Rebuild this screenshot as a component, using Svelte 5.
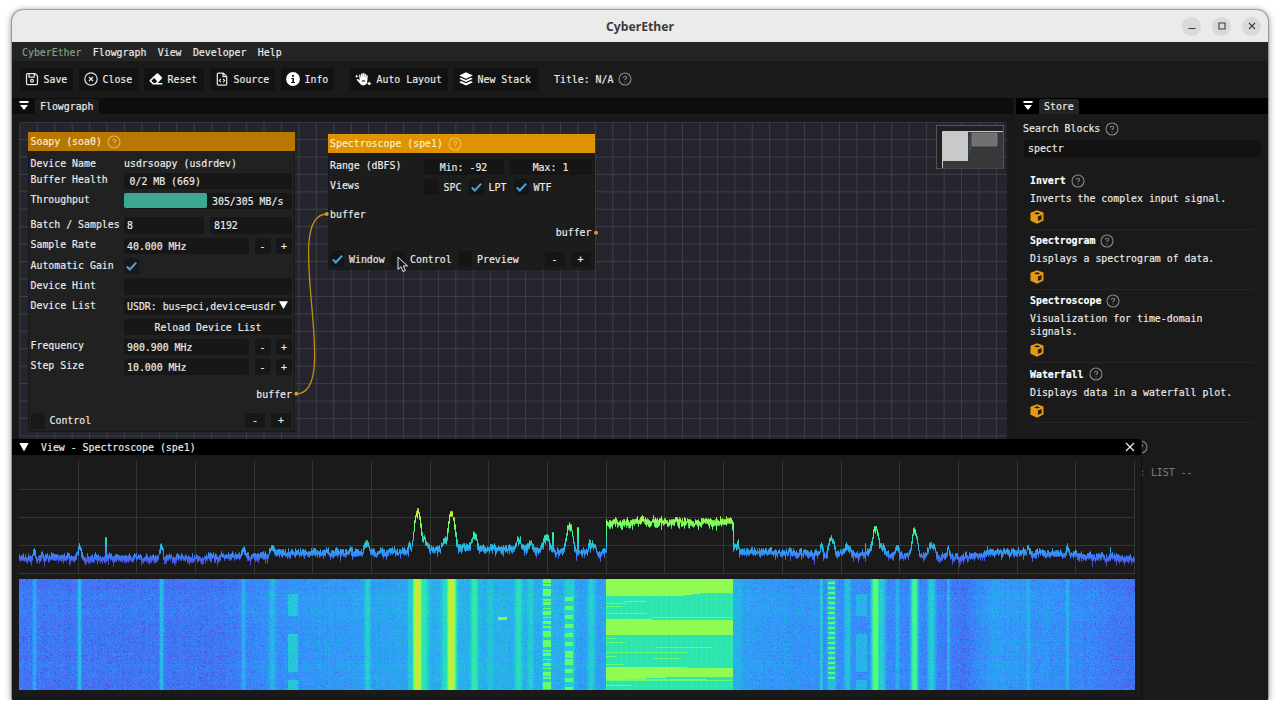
<script>
  import { onMount } from 'svelte';

  const menus = ['Flowgraph', 'View', 'Developer', 'Help'];
  const blocks = [
    { name: 'Invert', text: 'Inverts the complex input signal.' },
    { name: 'Spectrogram', text: 'Displays a spectrogram of data.' },
    { name: 'Spectroscope', text: 'Visualization for time-domain signals.' },
    { name: 'Waterfall', text: 'Displays data in a waterfall plot.' }
  ];

  const W = 1116;
  const PLOT_H = 113;
  const FALL_H = 111;
  let plot;
  let fall;

  // Noise floor as [x, y] points of the trace.
  const floor = [[0, 97], [200, 97], [225, 95], [260, 93], [350, 91], [410, 89], [440, 88], [540, 89], [560, 91], [586, 91], [715, 91], [760, 92], [910, 95], [945, 97], [975, 91], [1030, 93], [1075, 95], [1116, 98]];
  // Signals as [x, peak y, half width].
  const peaks = [[15, 89, 2], [60, 85, 2], [142, 86, 2], [224, 88, 2], [253, 87, 3], [348, 82, 3], [390, 83, 1.5], [398, 51, 4.5], [404, 77, 5], [426, 80, 4], [432, 53, 4.5], [455, 76, 3.5], [471, 85, 3], [499, 79, 3.5], [511, 83, 3], [527, 75, 3.5], [550, 66, 4], [572, 83, 4], [717, 84, 4], [802, 84, 1.5], [812, 77, 3.5], [828, 85, 3], [856, 68, 4], [862, 83, 4], [878, 88, 2], [895, 71, 3.5], [912, 83, 4], [929, 88, 1.5], [1009, 88, 1.5], [1048, 87, 1.5]];
  const spikes = [[86, 76], [533, 71], [558, 66], [846, 82], [1091, 86]];

  let seed = 77;
  function rnd() {
    seed = (seed * 1664525 + 1013904223) >>> 0;
    return seed / 4294967296;
  }
  const gauss = () => rnd() + rnd() + rnd() - 1.5;

  function traceY(x) {
    if (x >= 587 && x <= 713) return 61;
    let i = 1;
    while (i < floor.length - 1 && floor[i][0] < x) i++;
    const [x0, y0] = floor[i - 1];
    const [x1, y1] = floor[i];
    const base = y0 + ((y1 - y0) * (x - x0)) / (x1 - x0);
    let y = base;
    for (const [px, py, w] of peaks) {
      const d = Math.abs(x - px) / w;
      if (d < 3) y = Math.min(y, base - (base - py) * Math.exp(-Math.pow(d, 2.8)));
    }
    return y;
  }
  const level = (y) => 0.13 + (97 - y) * 0.0096;

  function turbo(v) {
    const x = Math.max(0.03, Math.min(1, v));
    const r = 0.1357 + x * (4.5974 - x * (42.3277 - x * (130.5887 - x * (150.5666 - x * 58.1375))));
    const g = 0.0914 + x * (2.1856 + x * (4.8052 - x * (14.0195 - x * (4.2109 + x * 2.7747))));
    const b = 0.1067 + x * (12.5925 - x * (60.1097 - x * (109.0745 - x * (88.5066 - x * 26.8183))));
    return [r, g, b].map((c) => Math.round(255 * Math.max(0, Math.min(1, c))));
  }

  function drawPlot() {
    const c = plot.getContext('2d');
    c.fillStyle = '#363636';
    for (let i = 1; i <= 19; i++) c.fillRect(Math.min(W - 1, Math.round(i * 58.68)), 0, 1, PLOT_H);
    for (const y of [28, 56, 84, 112]) c.fillRect(0, y, W, 1);
    let prev = traceY(0);
    let drift = 0;
    for (let x = 0; x < W; x++) {
      const inBand = x >= 587 && x <= 713;
      const base = traceY(x);
      drift = drift * 0.5 + gauss() * 2.2;
      let top = base + drift - 1.5 - rnd() * 3;
      let bottom = base + drift + 1.5 + rnd() * 3;
      if (rnd() < 0.15) bottom += rnd() * 6;
      if (inBand && rnd() < 0.1) bottom += 3;
      for (const [sx, sy] of spikes) if (x === sx || (x === sx + 1 && sx < 600)) top = sy;
      if (Math.abs(prev - base) > 4) {
        top = Math.min(top, prev);
        bottom = Math.max(bottom, prev);
      }
      prev = base;
      for (let y = Math.round(top); y <= bottom; y++) {
        const edge = y <= top + 0.6 || y >= bottom - 1.2;
        c.fillStyle = `rgba(${turbo(level(y)).join(',')},${edge ? 0.75 : 1})`;
        c.fillRect(x, y, 1, 1);
      }
    }
  }

  function drawFall() {
    const c = fall.getContext('2d');
    const img = c.createImageData(W, FALL_H);
    const cols = [];
    const jitter = [];
    for (let x = 0; x < W; x++) {
      cols.push(level(traceY(x)) + 0.015);
      jitter.push(gauss() * 0.008);
    }
    const rows = Array.from({ length: FALL_H }, (_, y) => gauss() * 0.007 + (y > 14 && y < 38 ? 0.008 : 0));
    const bursts = (y) => (y >= 15 && y < 37) || (y >= 55 && y < 93) || y >= 101;
    const gate546 = Array.from({ length: FALL_H }, (_, y) => Math.sin(y * 1.35) + Math.sin(y * 0.61) > -0.1);
    const gate569 = (y) => y > 17 && (y % 9 < 4 || (y > 70 && y < 86 && y % 4 < 3));
    const streaks = [[22, 18, 40], [24, 0, 20], [27, 0, 15], [34, 0, 41], [38, 45, 126], [59, 0, 10], [63, 0, 20], [68, 50, 105], [73, 0, 82], [77, 0, 10], [79, 48, 75], [85, 0, 18], [100, 20, 100], [101, 0, 126], [106, 0, 25]];
    for (let y = 0; y < FALL_H; y++) {
      for (let x = 0; x < W; x++) {
        let v = cols[x] + jitter[x] + rows[y];
        let n = gauss() * 0.03;
        if (rnd() < 0.07 && v < 0.2) n -= 0.035;
        if (x >= 587 && x < 714) {
          const dx = x - 587;
          const band = y < (dx > 70 ? 17 - Math.min(3, (dx - 70) / 8) : 17) || (y >= 40 + (dx > 45 ? 1 : 0) && y < 56) || (y >= (dx > 80 ? 89 : 88) && y < 101 - Math.min(3, dx / 20));
          v = band ? 0.495 : 0.33 + (dx % 5 === 0 ? 0.02 : 0);
          for (const [sy, s, e] of streaks) if (sy === y && dx >= s && dx < e) v = 0.44;
          n *= band ? 0.25 : 0.55;
          if (dx === 63) v -= 0.03;
        } else if (x >= 524 && x <= 531) v = gate546[y] ? 0.44 : 0.28;
        else if (x >= 546 && x <= 553) v = gate569(y) ? 0.43 : 0.28;
        else if (x >= 809 && x <= 815) v = y % 5 >= 3 && y < 101 ? 0.43 : 0.25;
        else if (x >= 269 && x <= 278) v = bursts(y) ? 0.27 : v;
        else if (x >= 837 && x <= 847) v = bursts(y) ? 0.24 : v;
        else if (x >= 714 && x < 721) v = 0.23;
        else if (Math.abs(x - 483) < 5 && Math.abs(y - 39) < 1.5) v = 0.5;
        if (v > 0.3) n *= 0.45;
        const [r, g, b] = turbo(v + n);
        const k = (y * W + x) * 4;
        img.data[k] = r;
        img.data[k + 1] = g;
        img.data[k + 2] = b;
        img.data[k + 3] = 255;
      }
    }
    c.putImageData(img, 0, 0);
  }

  onMount(() => {
    drawPlot();
    drawFall();
  });
</script>

{#snippet help()}
  <svg class="help" viewBox="0 0 14 14"><circle cx="7" cy="7" r="6" /><path d="M5.3 5.7C5.4 3.7 8.8 3.8 8.7 5.7C8.6 6.8 7 6.8 7 8" /><path d="M7 9.4v1.1" /></svg>
{/snippet}

{#snippet check(on)}
  <span class="check">
    {#if on}<svg viewBox="0 0 16 16"><path d="M3 8.6L6.2 11.8L13 4.4" /></svg>{/if}
  </span>
{/snippet}

{#snippet stepper(label, value)}
  <div class="row"><span class="label">{label}</span><span class="field">{value}</span><span class="btn">-</span><span class="btn">+</span></div>
{/snippet}

{#snippet collapse()}
  <svg class="collapse" viewBox="0 0 10 10"><path d="M0.5 0h9v2h-9zM1 4h8L5 9z" /></svg>
{/snippet}

<div class="window">
  <header class="titlebar">
    <span class="caption">CyberEther</span>
    <div class="controls">
      <span><svg viewBox="0 0 10 10"><path d="M1.5 7.5h7" /></svg></span>
      <span><svg viewBox="0 0 10 10"><path d="M2 2h6v6H2z" /></svg></span>
      <span><svg viewBox="0 0 10 10"><path d="M2 2l6 6M8 2L2 8" /></svg></span>
    </div>
  </header>

  <nav class="menubar">
    <span class="brand">CyberEther</span>
    {#each menus as m}<span>{m}</span>{/each}
  </nav>

  <div class="toolbar">
    <button style:width="53px"><svg class="line" viewBox="0 0 14 14"><path d="M2.5 1.5H10L12.5 4V11.5Q12.5 12.5 11.5 12.5H2.5Q1.5 12.5 1.5 11.5V2.5Q1.5 1.5 2.5 1.5ZM4 1.7V5H9.2V1.7" /><circle cx="7" cy="8.8" r="1.4" /></svg>Save</button>
    <button style:width="59px"><svg class="line" viewBox="0 0 14 14"><circle cx="7" cy="7" r="6.2" /><path d="M5 5l4 4M9 5L5 9" /></svg>Close</button>
    <button style:width="60px"><svg viewBox="0 0 14 14"><path fill-rule="evenodd" d="M7.7 1.5Q8.4 .9 9.1 1.5L12.9 5.2Q13.5 5.9 12.9 6.6L8.7 10.9H13.3V12.5H3.9L.8 9.4Q.2 8.7 .8 8ZM5.1 6.1L2.4 8.7L4.6 10.9H6.5L8.2 9.2Z" /></svg>Reset</button>
    <button style:width="65px"><svg class="line" viewBox="0 0 14 14"><path d="M3 1H8.2L11.7 4.5V12Q11.7 13 10.7 13H3.3Q2.3 13 2.3 12V2Q2.3 1 3 1ZM8 1.3V4.7H11.4M5.8 7L4.4 8.6L5.8 10.2M8.2 7L9.6 8.6L8.2 10.2" /></svg>Source</button>
    <button class="info" style:width="53px"><svg viewBox="0 0 14 14"><circle cx="7" cy="7" r="6.9" /><path class="ink" d="M6 3h2v1.7H6zM5.2 6H8v4h1v1.1H5.1V10h1.3V7H5.2z" /></svg>Info</button>
    <button style:width="98px"><svg class="hand" viewBox="0 0 18 14"><path d="M4.3 2.4Q5.3 2 5.6 3.2L6.2 6.3V1.9Q6.4 .9 7.3 1.2L7.8 6V1Q8.6 0 9.5 1V6L10 1.5Q11 .9 11.6 1.9L11.4 6.5L12.1 3Q13.3 2.5 13.5 3.6L13 9.6Q12.5 13.5 9 13.8Q6 13.8 4.5 11L1.8 8Q1.8 6.7 3.2 7.1L5 8.5ZM1.8 2l.7 1.5L4 4l-1.5.7L1.8 6l-.6-1.3L0 4l1.2-.5zM15 9.4l.9 1.7 1.8.8-1.8.8-.9 1.3-.8-1.3-1.5-.8 1.5-.8z" /><path class="ink" d="M7.1 8.9Q9 7.6 11 9.1L10.4 9.8Q9 8.8 7.6 9.8Z" /></svg>Auto Layout</button>
    <button style:width="84px"><svg viewBox="0 0 14 14"><path d="M7 .3L13.8 3.5L7 6.7L.2 3.5ZM2 5.7L7 8L12 5.7L13.8 6.8L7 10L.2 6.8ZM2 9L7 11.3L12 9L13.8 10.2L7 13.6L.2 10.2Z" /></svg>New Stack</button>
    <span class="title">Title: N/A {@render help()}</span>
  </div>

  <main class="dock">
    <section class="flow">
      <div class="tabs">{@render collapse()}<span class="tab">Flowgraph</span></div>
      <div class="canvas">
        <article class="node soapy">
          <h2>Soapy (soa0) {@render help()}</h2>
          <div class="rows">
            <div class="row plain"><span class="label">Device Name</span><span>usdrsoapy (usdrdev)</span></div>
            <div class="row"><span class="label">Buffer Health</span><span class="field">0/2 MB (669)</span></div>
            <div class="row"><span class="label">Throughput</span><span class="field meter"><i></i>305/305 MB/s</span></div>
            <div class="row gap"><span class="label">Batch / Samples</span><span class="field">8</span><span class="field half">8192</span></div>
            {@render stepper('Sample Rate', '40.000 MHz')}
            <div class="row"><span class="label">Automatic Gain</span>{@render check(true)}</div>
            <div class="row"><span class="label">Device Hint</span><span class="field"></span></div>
            <div class="row"><span class="label">Device List</span><span class="field select">USDR: bus=pci,device=usdr<svg viewBox="0 0 10 10"><path d="M0 .8h10L5 9.5z" /></svg></span></div>
            <div class="row"><span class="label"></span><span class="field center">Reload Device List</span></div>
            {@render stepper('Frequency', '900.900 MHz')}
            {@render stepper('Step Size', '10.000 MHz')}
          </div>
          <div class="port out">buffer</div>
          <div class="foot">{@render check(false)}<span class="grow">Control</span><span class="btn">-</span><span class="btn">+</span></div>
        </article>

        <article class="node scope">
          <h2>Spectroscope (spe1) {@render help()}</h2>
          <div class="rows">
            <div class="row"><span class="label">Range (dBFS)</span><span class="field center">Min: -92</span><span class="field half center">Max: 1</span></div>
            <div class="row views"><span class="label">Views</span>{@render check(false)}<span>SPC</span>{@render check(true)}<span>LPT</span>{@render check(true)}<span>WTF</span></div>
          </div>
          <div class="port in">buffer</div>
          <div class="port out">buffer</div>
          <div class="foot">{@render check(true)}<span class="w1">Window</span>{@render check(false)}<span class="w2">Control</span>{@render check(false)}<span class="grow">Preview</span><span class="btn">-</span><span class="btn">+</span></div>
        </article>

        <svg class="links" viewBox="0 0 988 317">
          <path d="M277.5 271.8C324 271.8 261 92 308 92" />
          <circle cx="277.3" cy="271.8" r="2" /><circle cx="307.7" cy="92" r="2" /><circle cx="577" cy="110.7" r="2" />
        </svg>

        <svg class="minimap" viewBox="0 0 68 44">
          <rect x=".5" y=".5" width="67" height="43" fill="#202025" stroke="#56565a" />
          <rect x="6" y="6.5" width="61" height="37" fill="#38383a" />
          <path d="M6.5 43V6.5H67" fill="none" stroke="#c8c8c8" />
          <path d="M32 28C37 28 31 12 36 12" fill="none" stroke="#2a5b80" />
          <rect x="6" y="7" width="26" height="29" fill="#c9c9c9" />
          <rect x="36" y="8" width="25" height="13" fill="#717173" stroke="#8b8b8d" stroke-width=".6" />
        </svg>

        <svg class="cursor" viewBox="0 0 12 17"><path d="M1 1V13.5L4 10.8L6 15.5L8.4 14.5L6.4 9.9H10.5Z" /></svg>
      </div>
    </section>

    <aside class="store">
      <div class="tabs">{@render collapse()}<span class="tab">Store</span></div>
      <div class="panel">
        <div class="search">Search Blocks {@render help()}</div>
        <div class="input">spectr</div>
        <div class="list">
          {#each blocks as b}
            <div class="block">
              <h3>{b.name} {@render help()}</h3>
              <p>{b.text}</p>
              <svg class="cube" viewBox="0 0 14 14"><path d="M7 .2L13.5 2.5V10.6L7 13.8L.5 10.8V2.7Z" /><path class="ink" d="M4 3.2L7 2.2L10.2 3.2L7.2 4.5ZM7.9 6.5L11.6 5V9.3L7.9 11Z" /></svg>
            </div>
          {/each}
        </div>
        <div class="behind">{@render help()}<span>: LIST --</span></div>
      </div>
    </aside>
  </main>

  <section class="view">
    <div class="viewbar">
      <svg class="tri" viewBox="0 0 10 10"><path d="M.3 1h9.4L5 9.4z" /></svg>
      <span>View - Spectroscope (spe1)</span>
      <svg class="x" viewBox="0 0 10 10"><path d="M1 1l8 8M9 1L1 9" /></svg>
    </div>
    <div class="charts">
      <canvas bind:this={plot} width={W} height={PLOT_H}></canvas>
      <canvas bind:this={fall} width={W} height={FALL_H}></canvas>
    </div>
  </section>
</div>

<style>
  :global(body) { background: #fff; overflow: hidden; }
  * { box-sizing: border-box; }
  svg { display: block; flex: none; }

  .window {
    position: relative;
    display: flex;
    flex-direction: column;
    width: 1256px;
    height: 690px;
    margin: 10px 0 0 12px;
    border-radius: 11px 11px 1px 1px;
    background: #1a1a1a;
    color: #ececec;
    font: 9.9px/13px "DejaVu Sans Mono", monospace;
    -webkit-text-stroke: .15px;
    white-space: nowrap;
    box-shadow: 0 0 0 1px rgba(0, 0, 0, .22), 0 1px 7px rgba(0, 0, 0, .55);
  }

  .titlebar {
    display: grid;
    grid-template-columns: 1fr auto 1fr;
    align-items: center;
    height: 32px;
    border-radius: 11px 11px 0 0;
    background: #ebebeb;
    color: #3c3c3c;
  }
  .caption { grid-column: 2; padding-top: 1px; font: bold 12.2px/20px "Noto Sans", sans-serif; -webkit-text-stroke: 0; }
  .controls { display: flex; justify-content: flex-end; gap: 11px; padding-right: 7px; }
  .controls span { display: grid; place-items: center; width: 19px; height: 19px; border-radius: 50%; background: #dadada; }
  .controls svg { width: 10px; fill: none; stroke: #3c3c3c; stroke-width: 1.1; }

  .menubar { display: flex; align-items: center; gap: 11.4px; height: 19px; padding: 2px 10px 0; background: #242424; }
  .menubar .brand { color: #84a384; }

  .toolbar { display: flex; align-items: center; gap: 6px; height: 37px; padding: 0 8px 1px; }
  .toolbar button {
    display: flex;
    align-items: center;
    gap: 5px;
    height: 23px;
    padding: 0 0 0 5px;
    border: 0;
    border-radius: 3px;
    background: #121212;
    color: inherit;
    font: inherit;
    white-space: nowrap;
  }
  .toolbar button svg { width: 14px; height: 14px; margin-left: -.5px; fill: #fff; }
  .toolbar button .line { fill: none; stroke: #e4e4e4; stroke-width: 1.25; }
  .toolbar button .hand { width: 17px; }
  .toolbar .ink { fill: #161616; }
  .info { margin-right: 10px; }
  .title { display: flex; align-items: center; margin-left: 10px; }

  .help { display: inline-block; width: 14px; height: 14px; margin-left: 5px; fill: none; stroke: #858585; stroke-width: 1.1; vertical-align: middle; }

  .dock { display: flex; flex: 1; min-height: 0; }
  .flow { display: flex; flex-direction: column; width: 1002px; border-right: 1px solid #141414; }
  .store { flex: 1; margin-left: 2px; }
  .tabs { display: flex; align-items: center; height: 16px; padding-left: 7px; background: #0d0d0d; }
  .store .tabs { background: #000; }
  .tab { height: 15px; margin: 1px 0 0 6px; padding: 1px 5px 0; border-radius: 3px 3px 0 0; background: #1c1c1c; }
  .store .tab { background: #232323; }
  .collapse { width: 10px; height: 10px; fill: #fff; }

  .canvas {
    position: relative;
    width: 988px;
    height: 317px;
    margin: 8px 0 0 7px;
    border-radius: 4px;
    overflow: hidden;
    background-color: #25252e;
    background-image: linear-gradient(90deg, #3e3e47 1px, transparent 1px), linear-gradient(#3e3e47 1px, transparent 1px);
    background-size: 17.45px 17.45px;
    background-position: .4px -.4px;
  }
  .node { position: absolute; width: 267px; background: #212121; border: 1px solid #181818; border-top: 0; }
  .node h2 { display: flex; align-items: center; height: 19px; margin: 0 -1px; padding-left: 2.5px; font: inherit; color: #fbeed5; background: #b77700; }
  .node h2 .help { stroke: rgba(255, 225, 165, .55); }
  .soapy { left: 9px; top: 10px; height: 300px; }
  .scope { left: 308.5px; top: 12px; height: 136px; background: #1c1c1c; }
  .scope h2 { background: #e09300; }
  .rows { padding: 3px 2px 0 1.5px; }
  .row { display: flex; height: 20.2px; }
  .row.plain { height: 18.5px; padding-top: 2.5px; }
  .row.gap { margin-top: 4.6px; height: 20.4px; }
  .label { width: 93.5px; margin-top: .5px; }
  .plain .label { margin-top: 0; }
  .field { flex: 1; height: 16.4px; padding: 2px 0 0 3px; border-radius: 2px; background: #171717; }
  .soapy .row:nth-child(2) .field { padding-left: 5.5px; }
  .field.half { flex: none; width: 82px; margin-left: 6px; }
  .soapy .half { padding-left: 4px; }
  .field.center { padding-left: 0; text-align: center; }
  .field.meter { display: flex; padding-left: 0; padding-top: 0; line-height: 17px; }
  .meter i { width: 83px; height: 15.5px; margin-right: 5px; border-radius: 2px; background: #3ea792; }
  .field.select { display: flex; padding-top: 2px; gap: 3px; }
  .select svg { width: 9px; height: 10px; fill: #fff; }
  .btn { width: 16px; height: 16.4px; margin-left: 5.5px; padding-top: 2px; border-radius: 2px; background: #171717; text-align: center; }
  .check { flex: none; width: 15px; height: 16px; border-radius: 2px; background: #181818; }
  .check svg { width: 15px; height: 16px; fill: none; stroke: #4aa3df; stroke-width: 2.2; }
  .port { line-height: 13px; padding: 0 2px 0 1.5px; }
  .port.out { text-align: right; }
  .soapy .port { margin-top: 9px; }
  .scope .rows { padding-top: 6px; }
  .scope .row .label { margin-top: 0; }
  .scope .field, .scope .btn, .scope .check { background: #151515; }
  .views > span { margin-right: 5px; line-height: 17px; }
  .views > .label { margin-right: 0; line-height: 13px; }
  .views > span:nth-child(3), .views > span:nth-child(5) { width: 20px; }
  .port.in { margin-top: 8.5px; }
  .port.in + .port { margin-top: 5px; }
  .foot { display: flex; align-items: center; height: 16px; margin-top: 11.5px; padding: 0 3px 0 1.5px; gap: 5px; }
  .foot .check { width: 14px; }
  .foot .btn { width: 20px; height: 15px; padding-top: 1px; margin-left: 1px; }
  .foot .grow { flex: 1; }
  .foot .w1 { width: 37px; }
  .foot .w2 { width: 43px; }
  .scope .foot { margin-top: 12.5px; }
  .links { position: absolute; inset: 0; width: 988px; height: 317px; fill: #e09a10; }
  .links path { fill: none; stroke: #c98c12; stroke-width: 1.3; }
  .minimap { position: absolute; left: 917px; top: 3px; width: 68px; height: 44px; }
  .cursor { position: absolute; left: 378px; top: 134px; width: 12px; height: 17px; fill: #1a1a1a; stroke: #eee; stroke-width: 1; }

  .panel { position: relative; padding: 7.5px 7px 0; }
  .search { display: flex; align-items: center; height: 14px; }
  .input { height: 17px; margin-top: 4.5px; margin-left: 1px; padding: 2px 4px; border-radius: 2px; background: #121212; }
  .list { margin-top: 9.6px; padding: 5px 6px 0; border: 1px solid #1e1e1e; border-bottom: 0; }
  .block { height: 60.2px; border-bottom: 1px solid #262626; padding-top: 3px; }
  .block:nth-child(1) { height: 57px; padding-top: 0; }
  .block:nth-child(3) { height: 73.4px; }
  .block h3 { display: flex; align-items: center; height: 16px; margin: 0; font: inherit; font-weight: bold; color: #fff; }
  .block p { width: 212px; margin: 3.5px 0 5px; white-space: normal; }
  .cube { width: 14px; height: 14px; fill: #e59a12; }
  .cube .ink { fill: #1a1a1a; }
  .behind { display: grid; gap: 12px; padding: 17px 0 0 106px; color: #777; }
  .behind span { padding-left: 10px; }

  .view { position: absolute; left: 0; top: 429px; width: 1130px; height: 260px; border: 1px solid #111; border-top: 0; background: #1a1a1a; }
  .viewbar { display: flex; align-items: center; height: 16px; margin-left: -1px; padding: 0 6px 0 7px; background: #000; border-radius: 0 4px 0 0; }
  .viewbar .tri { width: 10px; height: 10px; margin-right: 12px; fill: #fff; }
  .viewbar .x { width: 10px; height: 10px; margin-left: auto; fill: none; stroke: #eee; stroke-width: 1.2; }
  .charts { display: grid; gap: 5px; padding: 6px 0 0 6px; }
  .charts canvas { display: block; }
</style>
